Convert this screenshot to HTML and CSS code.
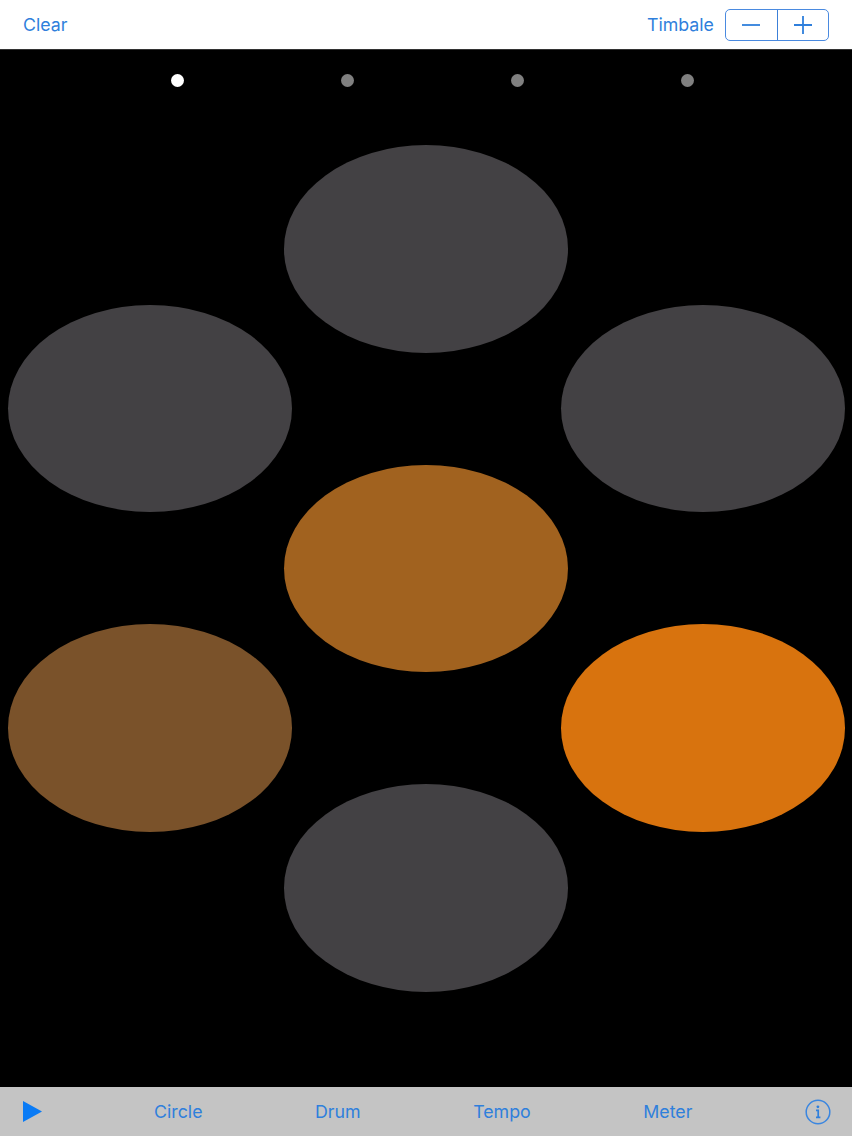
FILE: index.html
```html
<!DOCTYPE html>
<html lang="en">
<head>
    <meta charset="UTF-8">
    <meta name="viewport" content="width=device-width, initial-scale=1.0">
    <title>Drum Circle</title>
    <link rel="stylesheet" href="styles.css">
</head>
<body>
    <div class="navbar">
        <button class="link clear-btn">Clear</button>
        <div class="drum-picker">
            <span class="link">Timbale</span>
            <div class="stepper">
                <button class="step">
                    <svg width="18" height="18" viewBox="0 0 18 18"><path d="M0 9h18" /></svg>
                </button>
                <button class="step">
                    <svg width="18" height="18" viewBox="0 0 18 18"><path d="M0 9h18M9 0v18" /></svg>
                </button>
            </div>
        </div>
    </div>

    <div class="stage">
        <div class="beats">
            <div class="beat active"></div>
            <div class="beat"></div>
            <div class="beat"></div>
            <div class="beat"></div>
        </div>
        <div class="pads">
            <div class="pad-col side">
                <div class="pad"></div>
                <div class="pad medium"></div>
            </div>
            <div class="pad-col">
                <div class="pad"></div>
                <div class="pad warm"></div>
                <div class="pad"></div>
            </div>
            <div class="pad-col side">
                <div class="pad"></div>
                <div class="pad hot"></div>
            </div>
        </div>
    </div>

    <div class="toolbar">
        <button class="play-btn">
            <svg width="19" height="21" viewBox="0 0 19 21"><path d="M0 0L19 10.5L0 21Z" /></svg>
        </button>
        <button class="link">Circle</button>
        <button class="link">Drum</button>
        <button class="link">Tempo</button>
        <button class="link">Meter</button>
        <button class="info-btn">
            <svg width="26" height="26" viewBox="0 0 26 26">
                <circle cx="13" cy="13" r="11.8" />
                <path class="info-stem" d="M11 11.4h2.2v6.6M11 18.4h4.4" />
                <circle class="info-dot" cx="12.9" cy="7.8" r="1.4" />
            </svg>
        </button>
    </div>
</body>
</html>
```

FILE: styles.css
```css
* {
    box-sizing: border-box;
}

body {
    margin: 0;
    width: 852px;
    height: 1136px;
    overflow: hidden;
    display: flex;
    flex-direction: column;
    background-color: #000;
    font-family: Inter, "Liberation Sans", sans-serif;
}

button {
    background: none;
    border: none;
    padding: 0;
    font: inherit;
}

.link {
    color: #2f7fdc;
    font-size: 17.8px;
    line-height: 22px;
}

.navbar {
    height: 50px;
    flex: none;
    padding: 1px 23px 0;
    background-color: #fff;
    border-bottom: 1px solid #333;
    display: flex;
    justify-content: space-between;
    align-items: center;
}

.drum-picker {
    display: flex;
    align-items: center;
    gap: 11px;
}

.stepper {
    width: 104px;
    height: 32px;
    display: flex;
    border: 1px solid #4a8ae0;
    border-radius: 5px;
}

.step {
    flex: 1;
    display: flex;
    align-items: center;
    justify-content: center;
}

.step + .step {
    border-left: 1px solid #3c80d8;
}

.step svg {
    stroke: #2f7fdc;
    stroke-width: 1.8;
    fill: none;
}

.stage {
    flex: 1;
    display: flex;
    flex-direction: column;
}

.beats {
    display: flex;
    gap: 157.3px;
    padding: 24px 0 0 170.5px;
}

.beat {
    width: 13px;
    height: 13px;
    border-radius: 50%;
    background-color: #808080;
}

.beat.active {
    background-color: #fff;
}

.pads {
    display: flex;
    justify-content: center;
    padding-top: 58px;
    padding-left: 0.5px;
}

.pad-col {
    display: flex;
    flex-direction: column;
    gap: 112px;
}

.pad-col.side {
    padding-top: 159.75px;
}

.pad-col:first-child {
    margin-right: -8px;
}

.pad-col:last-child {
    margin-left: -7px;
}

.pad {
    width: 284px;
    height: 207.5px;
    border-radius: 50%;
    background-color: #434144;
}

.pad.warm {
    background-color: #a1621f;
}

.pad.medium {
    background-color: #7a522a;
}

.pad.hot {
    background-color: #d8730e;
}

.toolbar {
    height: 49px;
    flex: none;
    background-color: #c4c4c4;
    display: flex;
    align-items: center;
    gap: 112.5px;
    padding-left: 22.5px;
}

.play-btn {
    display: flex;
    margin-bottom: 1px;
}

.play-btn svg {
    fill: #0a7bf5;
}

.info-btn {
    display: flex;
    margin-left: auto;
    margin-right: 21.5px;
}

.info-btn svg {
    fill: none;
    stroke: #3a86e0;
    stroke-width: 1.5;
}

.info-btn .info-stem {
    stroke: #2f7fdc;
    stroke-width: 1.7;
}

.info-btn .info-dot {
    fill: #2f7fdc;
    stroke: none;
}
```
